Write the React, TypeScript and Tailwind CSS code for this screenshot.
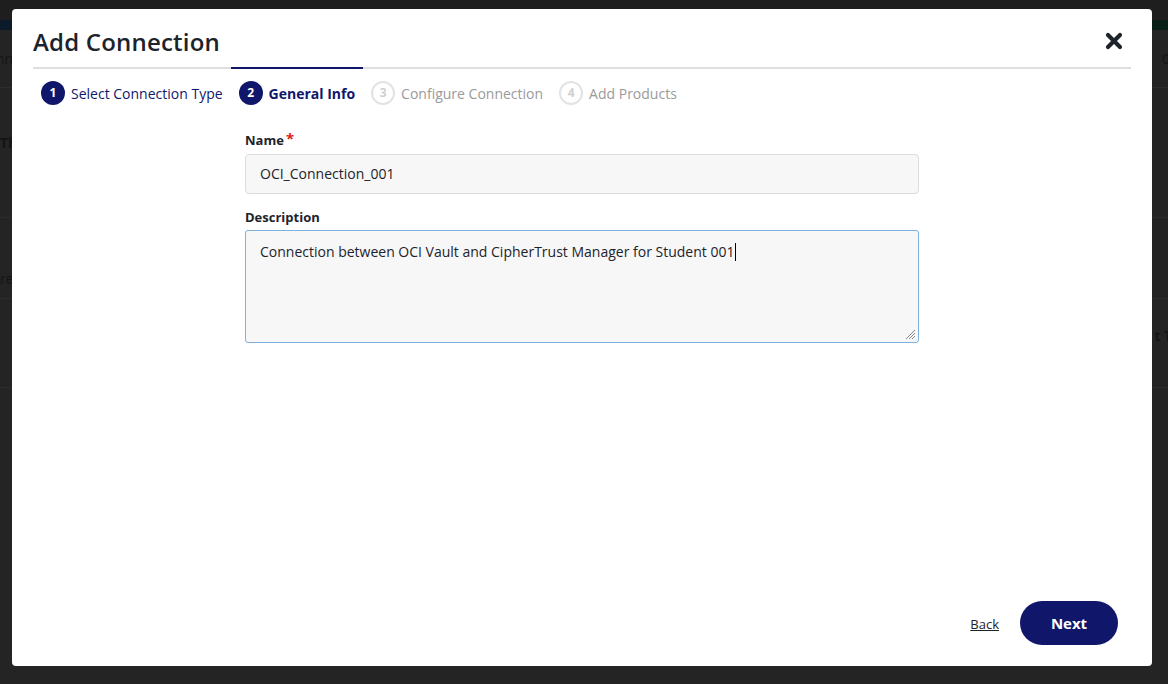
import React from 'react';

const steps = [
  { n: 1, label: 'Select Connection Type', state: 'done' },
  { n: 2, label: 'General Info', state: 'active' },
  { n: 3, label: 'Configure Connection', state: 'todo' },
  { n: 4, label: 'Add Products', state: 'todo' },
];

const StepItem: React.FC<{ n: number; label: string; state: string }> = ({ n, label, state }) => {
  const circle =
    state === 'todo'
      ? 'border-2 border-[#e3e3e3] text-[#cfcfcf] bg-white'
      : 'bg-[#10176b] text-white';
  const text =
    state === 'active'
      ? 'text-[#10176b] font-bold'
      : state === 'done'
      ? 'text-[#10176b]'
      : 'text-[#9a9a9a]';
  return (
    <div className="relative flex items-center gap-[6px] px-[8px] h-[48px]">
      {state === 'active' && (
        <div className="absolute left-0 right-0 top-[-2px] h-[2px] bg-[#10176b]" />
      )}
      <span
        className={`flex h-[24px] w-[24px] items-center justify-center rounded-full text-[12px] font-bold ${circle}`}
      >
        {n}
      </span>
      <span className={`text-[14px] ${text}`}>{label}</span>
    </div>
  );
};

const App: React.FC = () => {
  return (
    <div
      className="relative h-[684px] w-[1168px] overflow-hidden bg-[#242424]"
      style={{ fontFamily: '"Open Sans", "Noto Sans", sans-serif' }}
    >
      {/* page behind the dialog */}
      <div className="h-[20px] bg-[#1e1e1e]" />
      <div className="flex h-[10px]">
        <div className="w-1/2 bg-[#0b1b2b]" />
        <div className="w-1/2 bg-[#0a1f17]" />
      </div>
      <div className="flex h-[58px] items-center justify-between border-b border-[#2c2c2c] text-[14px] text-[#141414]">
        <span className="-ml-[4px]">nn</span>
        <span className="mr-[-2px]">0</span>
      </div>
      <div className="h-[130px] border-b border-[#2c2c2c] pt-[44px] text-[14px] font-bold text-[#141414]">Th</div>
      <div className="h-[80px] pt-[50px] text-[14px] text-[#141414]">re</div>
      <div className="flex h-[90px] justify-end border-y border-[#2c2c2c] pt-[26px] text-[14px] font-bold text-[#141414]">
        <span className="mr-[-4px]">t T</span>
      </div>

      {/* dialog */}
      <div className="absolute left-[12px] top-[9px] flex h-[657px] w-[1140px] flex-col rounded-[4px] bg-white px-[21px]">
        <div className="flex items-start justify-between pt-[17px]">
          <h2 className="text-[24px] font-semibold leading-[32px] tracking-[0.2px] text-[#1d232b]">Add Connection</h2>
          <button className="mr-[8px] mt-[6px]" aria-label="close">
            <svg width="18" height="18" viewBox="0 0 18 18">
              <path
                d="M3 3 L15 15 M15 3 L3 15"
                stroke="#1d232b"
                strokeWidth="4.2"
                strokeLinecap="round"
              />
            </svg>
          </button>
        </div>
        <div className="mt-[9px] h-[2px] bg-[#dedede]" />
        <div className="flex">
          {steps.map((s) => (
            <StepItem key={s.n} {...s} />
          ))}
        </div>

        <div className="ml-[212px] mt-[14px] w-[674px]">
          <label className="flex items-start text-[13px] font-bold text-[#1d232b]">
            Name<span className="ml-[2px] text-[15px] leading-[14px] text-[#e02020]">*</span>
          </label>
          <div className="mt-[3px] flex h-[40px] items-center rounded-[4px] border border-[#dcdcdc] bg-[#f7f7f7] px-[14px] text-[14px] text-[#1d232b]">
            OCI_Connection_001
          </div>
          <label className="mt-[14px] block text-[13px] font-bold text-[#1d232b]">Description</label>
          <div className="relative mt-[3px] h-[113px] rounded-[3px] border border-[#7db2df] bg-[#f7f7f7] px-[14px] pt-[8px] text-[14px] text-[#1d232b]">
            Connection between OCI Vault and CipherTrust Manager for Student 001
            <span className="ml-[1px] inline-block h-[18px] w-[1px] translate-y-[4px] bg-black" />
            <svg className="absolute bottom-[2px] right-[2px]" width="12" height="12" viewBox="0 0 12 12">
              <path d="M11 2 L2 11 M11 5 L5 11 M11 8 L8 11" stroke="#8a8a8a" strokeWidth="1" />
            </svg>
          </div>
        </div>

        <div className="mt-auto mb-[21px] flex items-center justify-end gap-[21px] pr-[13px]">
          <button className="translate-y-[2px] text-[13px] text-[#1d232b] underline">Back</button>
          <button className="h-[44px] w-[98px] rounded-full bg-[#10176b] text-[15px] font-bold text-white">
            Next
          </button>
        </div>
      </div>
    </div>
  );
};

export default App;
